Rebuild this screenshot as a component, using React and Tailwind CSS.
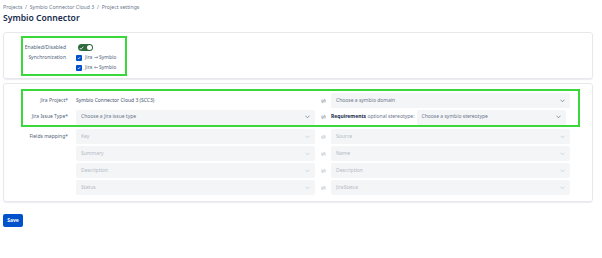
import React from 'react';

const Chevron = ({ light }) => (
  <svg width="5" height="4" viewBox="0 0 10 8" className="shrink-0">
    <path d="M1.5 2 L5 5.5 L8.5 2" fill="none" stroke={light ? '#c1c7d0' : '#6b778c'} strokeWidth="1.5" strokeLinecap="round" />
  </svg>
);

const Swap = ({ light }) => (
  <svg width="5" height="4" viewBox="0 0 12 10">
    <g fill="none" stroke={light ? '#a5adba' : '#6b778c'} strokeWidth="1.3" strokeLinecap="round" strokeLinejoin="round">
      <path d="M1 3 H10 M7.5 0.8 L10 3" />
      <path d="M11 7 H2 M4.5 9.2 L2 7" />
    </g>
  </svg>
);

const Select = ({ text, disabled, className = 'w-[239px]' }) => (
  <div className={`${className} h-[15px] bg-[#f4f5f7] rounded-[2px] flex items-center justify-between pl-[5px] pr-[5px]`}>
    <span className={disabled ? 'text-[#b3bac5]' : 'text-[#6b778c]'}>{text}</span>
    <Chevron light={disabled} />
  </div>
);

const SwapCell = ({ light }) => (
  <div className="w-[16px] flex items-center justify-center">
    <Swap light={light} />
  </div>
);

const Label = ({ children }) => (
  <div className="w-[45px] text-right text-[#505f79] whitespace-nowrap">{children}</div>
);

const MAPPINGS = [
  ['Fields mapping*', 'Key', 'Source'],
  ['', 'Summary', 'Name'],
  ['', 'Description', 'Description'],
  ['', 'Status', 'JiraStatus'],
];

export default function App() {
  return (
    <div className="w-[602px] h-[258px] bg-white px-[3px] pt-[4px] text-[5px] text-[#172b4d]" style={{ fontFamily: '"Noto Sans", "Open Sans", sans-serif' }}>
      <div className="text-[5.2px] text-[#6b778c] h-[6px] leading-[6px]">
        Projects&nbsp;&nbsp;/&nbsp;&nbsp;Symbio Connector Cloud 3&nbsp;&nbsp;/&nbsp;&nbsp;Project settings
      </div>
      <h1 className="text-[8.6px] font-semibold leading-[12px] mt-[2px] text-[#172b4d]">Symbio Connector</h1>

      {/* Synchronization card */}
      <div className="mt-[8px] w-[590px] h-[47px] border border-[#e6e8ec] rounded-[3px] shadow-[0_1px_1px_rgba(9,30,66,0.08)] pl-[17px] pt-[3px]">
        <div className="w-[106px] h-[40px] border-2 border-[#3ad83a] pt-[4px] flex flex-col">
          <div className="flex items-center h-[11px]">
            <div className="w-[45px] text-right text-[#505f79] whitespace-nowrap -ml-[2px]">Enabled/Disabled</div>
            <div className="ml-[12px] w-[15px] h-[7px] rounded-full bg-[#2f6b3f] flex items-center justify-between px-[1px]">
              <svg width="5" height="4" viewBox="0 0 10 8"><path d="M1.5 4 L4 6.5 L8.5 1.5" fill="none" stroke="#fff" strokeWidth="1.6" /></svg>
              <div className="w-[5px] h-[5px] rounded-full bg-white" />
            </div>
          </div>
          <div className="flex items-start h-[10px] pt-[1px]">
            <div className="w-[45px] text-right text-[#505f79] whitespace-nowrap -ml-[2px] leading-[7px]">Synchronization</div>
            <div className="ml-[10px] flex flex-col gap-[3px]">
              {['Jira ⇒ Symbio', 'Jira ⇐ Symbio'].map(t => (
                <div key={t} className="flex items-center gap-[3px] h-[7px]">
                  <div className="w-[6px] h-[6px] rounded-[1px] bg-[#0052cc] flex items-center justify-center">
                    <svg width="4" height="4" viewBox="0 0 10 10"><path d="M2 5 L4.2 7.2 L8 2.8" fill="none" stroke="#fff" strokeWidth="1.8" /></svg>
                  </div>
                  <span className="text-[#505f79]">{t}</span>
                </div>
              ))}
            </div>
          </div>
        </div>
      </div>

      {/* Mapping card */}
      <div className="mt-[4px] w-[590px] h-[119px] border border-[#e6e8ec] rounded-[3px] shadow-[0_1px_1px_rgba(9,30,66,0.08)] pl-[17px] pt-[5px]">
        <div className="w-[559px] border-2 border-[#3ad83a] pt-[1px] flex flex-col">
          <div className="flex items-center h-[17px]">
            <Label>Jira Project*</Label>
            <div className="w-[239px] ml-[8px] text-[#42526e]">Symbio Connector Cloud 3 (SCC3)</div>
            <SwapCell />
            <Select text="Choose a symbio domain" />
          </div>
          <div className="flex items-center h-[16px]">
            <Label>Jira Issue Type*</Label>
            <div className="ml-[8px]"><Select text="Choose a jira issue type" /></div>
            <SwapCell />
            <div className="flex items-center gap-[2px]">
              <span className="whitespace-nowrap text-[#6b778c]"><b className="text-[#172b4d]">Requirements</b> optional stereotype:</span>
              <Select text="Choose a symbio stereotype" className="w-[149px]" />
            </div>
          </div>
        </div>
        <div className="pl-[2px] flex flex-col pt-[1px]">
          {MAPPINGS.map(([label, left, right], i) => (
            <div key={i} className="flex items-center h-[17px]">
              <Label>{label}</Label>
              <div className="ml-[8px]"><Select text={left} disabled /></div>
              <SwapCell light />
              <Select text={right} disabled />
            </div>
          ))}
        </div>
      </div>

      <button className="mt-[12px] w-[20px] h-[13px] bg-[#0052cc] rounded-[2px] text-white font-bold text-[5px] flex items-center justify-center">
        Save
      </button>
    </div>
  );
}
